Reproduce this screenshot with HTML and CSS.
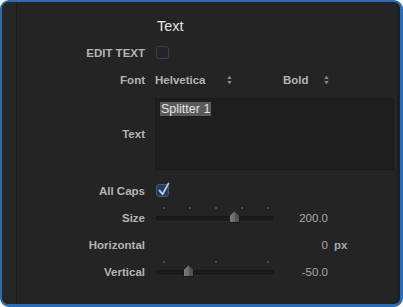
FILE: index.html
```html
<!DOCTYPE html>
<html>
<head>
<meta charset="utf-8">
<link rel="stylesheet" href="styles.css">
</head>
<body>
<div class="frame">
  <div class="gutter"></div>
  <div class="panel">
    <div class="row">
      <div class="label"></div>
      <div class="title">Text</div>
    </div>
    <div class="row">
      <div class="label">EDIT TEXT</div>
      <div class="ctl"><span class="check"></span></div>
    </div>
    <div class="row">
      <div class="label">Font</div>
      <div class="ctl">
        <div class="select font-select"><span>Helvetica</span>
          <svg class="stepper" width="5" height="10" viewBox="0 0 5 10"><path d="M0.3 4 L2.5 0.8 L4.7 4 Z M0.3 6 L2.5 9.2 L4.7 6 Z" fill="#8a8a8a"/></svg>
        </div>
        <div class="select weight-select"><span>Bold</span>
          <svg class="stepper" width="5" height="10" viewBox="0 0 5 10"><path d="M0.3 4 L2.5 0.8 L4.7 4 Z M0.3 6 L2.5 9.2 L4.7 6 Z" fill="#8a8a8a"/></svg>
        </div>
      </div>
    </div>
    <div class="row tall">
      <div class="label">Text</div>
      <div class="textbox"><span class="sel">Splitter 1</span></div>
    </div>
    <div class="row">
      <div class="label">All Caps</div>
      <div class="ctl"><span class="check on">
        <svg class="tick" width="14" height="16" viewBox="0 0 14 16"><path d="M2.6 8.6 L5.6 12.2 L11.4 1.6" fill="none" stroke="#a9cbf8" stroke-width="1.9" stroke-linecap="round" stroke-linejoin="round"/></svg>
      </span></div>
    </div>
    <div class="row">
      <div class="label">Size</div>
      <div class="ctl">
        <div class="slider">
          <div class="ticks"><i></i><i></i><i></i><i></i><i></i></div>
          <div class="track"></div>
          <svg class="thumb size-thumb" width="13" height="14" viewBox="0 0 13 14">
            <defs><linearGradient id="g1" x1="0" y1="0" x2="1" y2="0"><stop offset="0" stop-color="#7c7c7c"/><stop offset="0.5" stop-color="#6a6a6a"/><stop offset="0.5" stop-color="#575757"/><stop offset="1" stop-color="#4e4e4e"/></linearGradient></defs>
            <path d="M1.5 12.5 V5.6 L6.5 0.9 L11.5 5.6 V12.5 Z" fill="url(#g1)" stroke="#1a1a1a" stroke-width="1" stroke-linejoin="round"/>
          </svg>
        </div>
        <div class="value">200.0</div>
      </div>
    </div>
    <div class="row">
      <div class="label">Horizontal</div>
      <div class="ctl">
        <div class="spacer"></div>
        <div class="value">0</div>
        <div class="unit">px</div>
      </div>
    </div>
    <div class="row">
      <div class="label">Vertical</div>
      <div class="ctl">
        <div class="slider">
          <div class="ticks"><i></i><i></i><i></i></div>
          <div class="track"></div>
          <svg class="thumb vert-thumb" width="13" height="14" viewBox="0 0 13 14">
            <defs><linearGradient id="g2" x1="0" y1="0" x2="1" y2="0"><stop offset="0" stop-color="#7c7c7c"/><stop offset="0.5" stop-color="#6a6a6a"/><stop offset="0.5" stop-color="#575757"/><stop offset="1" stop-color="#4e4e4e"/></linearGradient></defs>
            <path d="M1.5 12.5 V5.6 L6.5 0.9 L11.5 5.6 V12.5 Z" fill="url(#g2)" stroke="#1a1a1a" stroke-width="1" stroke-linejoin="round"/>
          </svg>
        </div>
        <div class="value">-50.0</div>
      </div>
    </div>
  </div>
  <div class="edge"></div>
</div>
</body>
</html>
```

FILE: styles.css
```css
html, body {
  margin: 0;
  padding: 0;
  background: #ffffff;
}

.frame {
  box-sizing: border-box;
  width: 403px;
  height: 307px;
  border: 2px solid #2a6cb6;
  border-right-width: 3px;
  border-bottom-width: 3px;
  border-radius: 9px;
  background: #242424;
  display: flex;
  overflow: hidden;
  font-family: "Liberation Sans", Arial, sans-serif;
}

.gutter {
  width: 14px;
  background: #262626;
  border-right: 1px solid #1b1b1b;
}

.edge {
  width: 3px;
  background: #1e1e1e;
}

.panel {
  flex: 1;
  padding: 10px 3px 0 0;
}

.row {
  display: grid;
  grid-template-columns: 128px 1fr;
  column-gap: 10px;
  height: 27px;
  align-items: center;
}

.row.tall {
  height: 72px;
  margin: 5px 0 7px;
}

.label {
  text-align: right;
  font-size: 11.5px;
  font-weight: bold;
  color: #b4b4b4;
  white-space: nowrap;
}

.title {
  padding-left: 2px;
  font-size: 14.5px;
  color: #e6e6e6;
}

.ctl {
  display: flex;
  align-items: center;
  height: 27px;
}

.check {
  position: relative;
  box-sizing: border-box;
  width: 13px;
  height: 13px;
  margin-left: 1px;
  border: 1px solid #3a4352;
  border-radius: 3px;
  background: #222428;
}

.check.on {
  background: #2a3a54;
  border-color: #44587a;
}

.tick {
  position: absolute;
  left: 0;
  top: -3px;
}

.select {
  display: flex;
  align-items: center;
  justify-content: space-between;
  font-size: 11.5px;
  font-weight: bold;
  color: #b4b4b4;
}

.font-select {
  width: 77px;
}

.weight-select {
  width: 46px;
  margin-left: 51px;
}

.stepper {
  display: block;
}

.textbox {
  box-sizing: border-box;
  height: 72px;
  background: #1e1e1e;
  border: 1px solid #1a1a1a;
  padding: 0 0 0 4px;
}

.sel {
  display: inline-block;
  background: #5a5a5a;
  color: #e2e2e2;
  font-size: 12.5px;
  line-height: 14px;
  padding: 0 1px;
}

.slider {
  position: relative;
  width: 118px;
  height: 27px;
  margin-left: 1px;
}

.spacer {
  width: 118px;
  margin-left: 1px;
}

.ticks {
  display: flex;
  justify-content: space-between;
  padding: 0 5px 0 7px;
  margin-top: 3px;
}

.ticks i {
  display: block;
  width: 2px;
  height: 2px;
  background: #4c4c4c;
}

.track {
  position: absolute;
  left: 0;
  right: 0;
  top: 12px;
  height: 5px;
  border-radius: 3px;
  background: #1b1b1b;
  box-shadow: inset 0 1px 0 #161616, 0 1px 0 #2a2a2a;
}

.thumb {
  position: absolute;
  top: 6px;
}

.size-thumb {
  left: 72px;
}

.vert-thumb {
  left: 26px;
}

.value {
  width: 54px;
  text-align: right;
  font-size: 11.5px;
  color: #a9a9a9;
}

.unit {
  margin-left: 6px;
  font-size: 11.5px;
  font-weight: bold;
  color: #a9a9a9;
}
```
